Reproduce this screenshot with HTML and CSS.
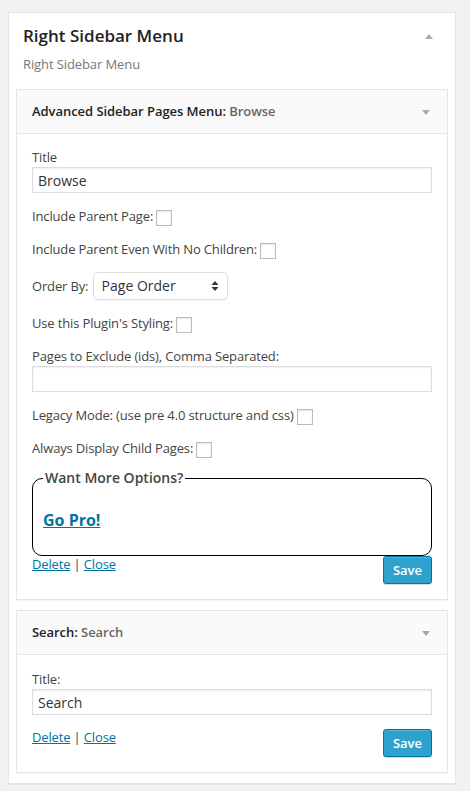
FILE: index.html
```html
<!DOCTYPE html>
<html lang="en">
<head>
<meta charset="utf-8">
<title>Right Sidebar Menu</title>
<link rel="stylesheet" href="styles.css">
</head>
<body>
<div class="panel">
  <div class="panel-head">
    <h3 class="panel-title">Right Sidebar Menu</h3>
    <span class="toggle"><svg width="20" height="20" viewBox="0 0 20 20"><path d="M6 13 L10 8 L14 13 Z" fill="#aaa"/></svg></span>
  </div>
  <p class="panel-desc">Right Sidebar Menu</p>

  <div class="widgets">
    <div class="widget">
      <div class="widget-top">
        <h4 class="widget-title">Advanced Sidebar Pages Menu: <span class="in-title">Browse</span></h4>
        <span class="toggle"><svg width="20" height="20" viewBox="0 0 20 20"><path d="M6 8 L14 8 L10 13 Z" fill="#aaa"/></svg></span>
      </div>
      <div class="widget-inside">
        <p class="field"><label class="label">Title</label><input class="text" type="text" value="Browse"></p>
        <p class="row">Include Parent Page: <span class="check"></span></p>
        <p class="row">Include Parent Even With No Children: <span class="check"></span></p>
        <p class="row order">Order By: <span class="select"><span class="select-text">Page Order</span><svg width="8" height="12" viewBox="0 0 8 12"><path d="M0.5 5 L4 1 L7.5 5 Z M0.5 7 L7.5 7 L4 11 Z" fill="#333"/></svg></span></p>
        <p class="row">Use this Plugin's Styling: <span class="check"></span></p>
        <p class="field"><label class="label">Pages to Exclude (ids), Comma Separated:</label><input class="text" type="text" value=""></p>
        <p class="row">Legacy Mode: (use pre 4.0 structure and css) <span class="check"></span></p>
        <p class="row">Always Display Child Pages: <span class="check"></span></p>
        <fieldset class="pro">
          <legend class="pro-legend">Want More Options?</legend>
          <p class="gopro"><a href="#">Go Pro!</a></p>
        </fieldset>
        <div class="actions">
          <span class="links"><a href="#">Delete</a> | <a href="#">Close</a></span>
          <button class="save" type="button">Save</button>
        </div>
      </div>
    </div>

    <div class="widget">
      <div class="widget-top">
        <h4 class="widget-title">Search: <span class="in-title">Search</span></h4>
        <span class="toggle"><svg width="20" height="20" viewBox="0 0 20 20"><path d="M6 8 L14 8 L10 13 Z" fill="#aaa"/></svg></span>
      </div>
      <div class="widget-inside search">
        <p class="field"><label class="label">Title:</label><input class="text" type="text" value="Search"></p>
        <div class="actions">
          <span class="links"><a href="#">Delete</a> | <a href="#">Close</a></span>
          <button class="save" type="button">Save</button>
        </div>
      </div>
    </div>
  </div>
</div>
</body>
</html>
```

FILE: styles.css
```css
html, body {
  margin: 0;
  padding: 0;
}
body {
  background: #f1f1f1;
  font-family: "Open Sans", "Liberation Sans", sans-serif;
  font-size: 13px;
  color: #444;
  padding: 12px 0 8px 8px;
}
a {
  color: #0074a2;
  text-decoration: underline;
}
.panel {
  width: 446px;
  background: #fff;
  border: 1px solid #e5e5e5;
  box-shadow: 0 1px 1px rgba(0,0,0,.04);
  padding: 0 0 10px;
}
.panel-head {
  display: flex;
  justify-content: space-between;
  align-items: flex-start;
  padding: 11px 16px 0 14px;
}
.panel-title {
  margin: 0;
  font-size: 17px;
  font-weight: 600;
  line-height: 24px;
  color: #222;
}
.panel-head .toggle {
  margin-top: 2px;
}
.toggle {
  display: block;
  width: 20px;
  height: 20px;
}
.toggle svg {
  display: block;
}
.panel-desc {
  margin: 6px 0 0 14px;
  line-height: 20px;
  color: #777;
  letter-spacing: -0.1px;
}
.widgets {
  margin-top: 15px;
  padding: 0 7px;
  display: flex;
  flex-direction: column;
  gap: 10px;
}
.widget {
  border: 1px solid #e5e5e5;
  background: #fff;
  box-shadow: 0 1px 1px rgba(0,0,0,.04);
}
.widget-top {
  display: flex;
  justify-content: space-between;
  align-items: center;
  height: 43px;
  background: #fafafa;
  border-bottom: 1px solid #e5e5e5;
  padding: 0 11px 0 15px;
}
.widget-title {
  margin: 0;
  font-size: 13px;
  font-weight: 600;
  line-height: 43px;
  color: #222;
  letter-spacing: -0.05px;
}
.in-title {
  color: #666;
}
.widget-inside {
  padding: 0 15px 15px;
  letter-spacing: -0.15px;
}
.widget-inside p {
  margin: 13px 0;
}
.widget-inside.search p {
  margin: 14px 0;
}
.field .label {
  display: block;
  line-height: 20px;
}
.text {
  display: block;
  box-sizing: border-box;
  width: 100%;
  height: 26px;
  margin: 0;
  padding: 2px 5px;
  border: 1px solid #ddd;
  box-shadow: inset 0 1px 2px rgba(0,0,0,.07);
  font-family: "Open Sans", "Liberation Sans", sans-serif;
  font-size: 14px;
  color: #333;
  background: #fff;
  outline: none;
}
.row {
  display: flex;
  align-items: center;
  height: 20px;
  line-height: 20px;
  white-space: pre;
}
.check {
  display: block;
  width: 14px;
  height: 14px;
  margin-top: 3px;
  border: 1px solid #bbb;
  background: #fff;
  box-shadow: inset 0 1px 2px rgba(0,0,0,.1);
}
.row.order {
  height: 28px;
}
.select {
  display: flex;
  align-items: center;
  justify-content: space-between;
  box-sizing: border-box;
  width: 135px;
  height: 28px;
  margin-left: 1px;
  padding: 0 8px 0 8px;
  border: 1px solid #ddd;
  border-radius: 5px;
  background: #fff;
  box-shadow: 0 1px 1px rgba(0,0,0,.04);
  font-size: 14px;
  color: #333;
  letter-spacing: 0;
}
.select svg {
  display: block;
}
.pro {
  margin: 13px 0 0;
  padding: 4px 10px 8px;
  border: 1px solid #000;
  border-radius: 10px;
}
.pro-legend {
  padding: 0 2px;
  font-size: 14px;
  font-weight: 600;
  line-height: 14px;
  color: #444;
  letter-spacing: 0;
}
.widget-inside .gopro {
  margin: 20px 0 16px;
  font-size: 16px;
  font-weight: 700;
  line-height: 22px;
  letter-spacing: 0;
}
.actions {
  display: flex;
  justify-content: space-between;
  align-items: flex-start;
}
.links {
  line-height: 16px;
}
.save {
  box-sizing: border-box;
  height: 28px;
  margin: 0;
  padding: 0 9px 1px;
  background: #2ea2cc;
  border: 1px solid #0074a2;
  border-radius: 3px;
  box-shadow: inset 0 1px 0 rgba(120,200,230,.5), 0 1px 0 rgba(0,0,0,.15);
  color: #fff;
  font-family: "Open Sans", "Liberation Sans", sans-serif;
  font-size: 13px;
  font-weight: 600;
  line-height: 26px;
  letter-spacing: 0;
}
```
